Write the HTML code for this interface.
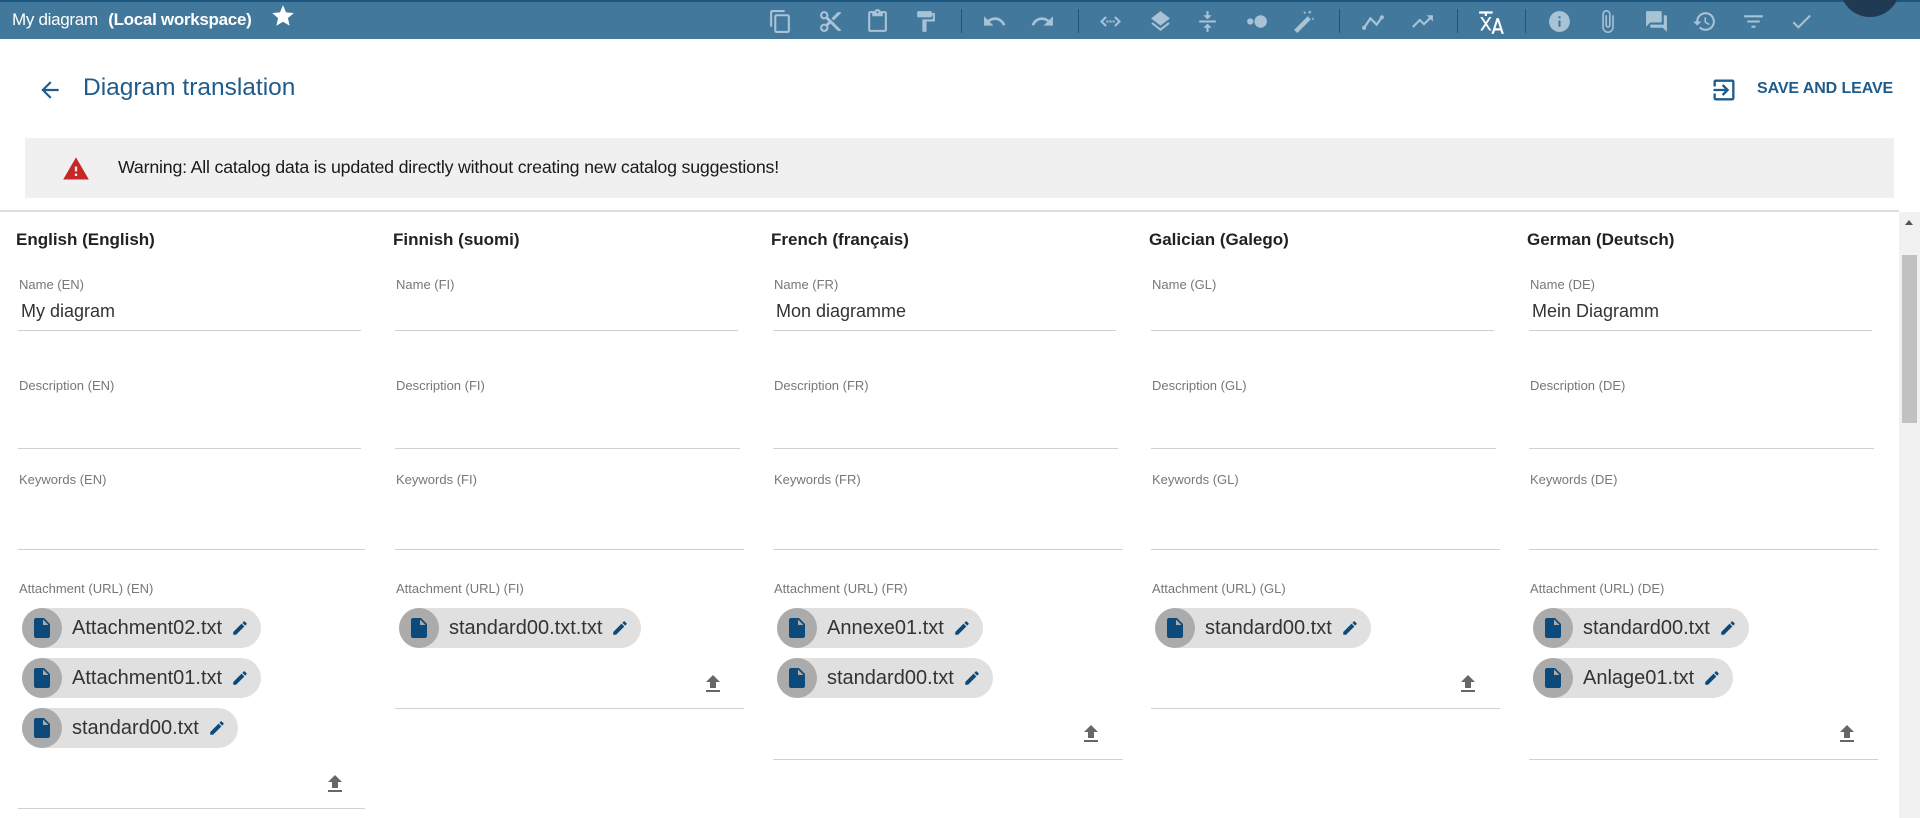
<!DOCTYPE html>
<html><head><meta charset="utf-8"><style>
*{box-sizing:border-box;margin:0;padding:0}
body{width:1920px;height:818px;overflow:hidden;background:#fff;font-family:"Liberation Sans",Arial,sans-serif;position:relative}
.abs{position:absolute;white-space:nowrap}
.top{position:absolute;left:0;top:0;width:1920px;height:39px;background:#41789c;border-top:2px solid #1b5680}
.top .t{position:absolute;left:12px;top:8px;color:#fff;font-size:17px;letter-spacing:-0.3px;white-space:nowrap}
.top .t b{margin-left:6px}
.ic{position:absolute;top:7px;width:25px;height:25px;fill:#a9c3d6}
.sep{position:absolute;top:7px;width:1px;height:24px;background:#1d5580}
.av{position:absolute;left:1840px;top:-45px;width:60px;height:60px;border-radius:50%;background:#1f3a52}
.h{position:absolute;left:0;top:230px;font-size:17px;font-weight:bold;color:#222;white-space:nowrap}
.lbl{position:absolute;font-size:13px;color:#777;white-space:nowrap}
.val{position:absolute;font-size:18px;color:#333;white-space:nowrap}
.ln{position:absolute;height:1px;background:#d0d0d0}
.chip{position:absolute;height:40px;border-radius:20px;background:#e0e0e0;display:flex;align-items:center;padding-right:12px;font-size:20px;color:#333;white-space:nowrap}
.chip .c{width:40px;height:40px;border-radius:50%;background:#ababab;display:flex;align-items:center;justify-content:center;margin-right:10px}
.chip svg.e{margin-left:9px}
</style></head><body>
<div class="top">
<div class="t">My diagram <b>(Local workspace)</b></div>
<svg class="abs" style="left:270px;top:1px" width="26" height="26" viewBox="0 0 24 24"><path fill="#fff" d="M12 17.27L18.18 21l-1.64-7.030L22 9.24l-7.19-.61L12 2 9.19 8.63 2 9.24l5.46 4.73L5.82 21z"/></svg>
<svg class="ic" style="left:768px" viewBox="0 0 24 24"><path d="M16 1H4c-1.1 0-2 .9-2 2v14h2V3h12V1zm3 4H8c-1.1 0-2 .9-2 2v14c0 1.1.9 2 2 2h11c1.1 0 2-.9 2-2V7c0-1.1-.9-2-2-2zm0 16H8V7h11v14z"/></svg>
<svg class="ic" style="left:818px" viewBox="0 0 24 24"><path d="M9.64 7.64c.23-.5.36-1.05.36-1.64 0-2.21-1.79-4-4-4S2 3.79 2 6s1.79 4 4 4c.59 0 1.14-.13 1.64-.36L10 12l-2.36 2.36C7.14 14.13 6.59 14 6 14c-2.21 0-4 1.79-4 4s1.79 4 4 4 4-1.79 4-4c0-.59-.13-1.14-.36-1.64L12 14l7 7h3v-1L9.64 7.64zM6 8c-1.1 0-2-.89-2-2s.9-2 2-2 2 .89 2 2-.9 2-2 2zm0 12c-1.1 0-2-.89-2-2s.9-2 2-2 2 .89 2 2-.9 2-2 2zM19 3l-6 6 2 2 7-7V3z"/></svg>
<svg class="ic" style="left:865px" viewBox="0 0 24 24"><path d="M19 2h-4.18C14.4.84 13.3 0 12 0c-1.3 0-2.4.84-2.82 2H5c-1.1 0-2 .9-2 2v16c0 1.1.9 2 2 2h14c1.1 0 2-.9 2-2V4c0-1.1-.9-2-2-2zm-7 0c.55 0 1 .45 1 1s-.45 1-1 1-1-.45-1-1 .45-1 1-1zm7 18H5V4h2v3h10V4h2v16z"/></svg>
<svg class="ic" style="left:913px" viewBox="0 0 24 24"><path d="M18 4V3c0-.55-.45-1-1-1H5c-.55 0-1 .45-1 1v4c0 .55.45 1 1 1h12c.55 0 1-.45 1-1V6h1v4H9v11c0 .55.45 1 1 1h2c.55 0 1-.45 1-1v-9h8V4h-3z"/></svg>
<div class="sep" style="left:961px"></div>
<svg class="ic" style="left:982px" viewBox="0 0 24 24"><path d="M12.5 8c-2.65 0-5.05.99-6.9 2.6L2 7v9h9l-3.62-3.62c1.39-1.16 3.16-1.88 5.12-1.88 3.54 0 6.55 2.31 7.6 5.5l2.37-.78C21.08 11.03 17.15 8 12.5 8z"/></svg>
<svg class="ic" style="left:1030px" viewBox="0 0 24 24"><path d="M18.4 10.6C16.55 8.99 14.15 8 11.5 8c-4.65 0-8.58 3.03-9.96 7.22L3.9 16c1.05-3.19 4.05-5.5 7.6-5.5 1.95 0 3.73.72 5.12 1.88L13 16h9V7l-3.6 3.6z"/></svg>
<div class="sep" style="left:1078px"></div>
<svg class="ic" style="left:1098px" viewBox="0 0 24 24"><path d="M7 7l-5 5 5 5 1.4-1.4L4.8 12l3.6-3.6zM17 7l-1.4 1.4 3.6 3.6-3.6 3.6L17 17l5-5zM8 11h2v2H8zm3 0h2v2h-2zm3 0h2v2h-2z"/></svg>
<svg class="ic" style="left:1148px" viewBox="0 0 24 24"><path d="M11.99 18.54l-7.37-5.73L3 14.07l9 7 9-7-1.63-1.27-7.38 5.74zM12 16l7.36-5.73L21 9l-9-7-9 7 1.63 1.27L12 16z"/></svg>
<svg class="ic" style="left:1195px" viewBox="0 0 24 24"><path d="M4 11h16v2H4zM11 2h2v4h3l-4 4-4-4h3zM12 14l4 4h-3v4h-2v-4H8z"/></svg>
<svg class="ic" style="left:1244px" viewBox="0 0 24 24"><circle cx="6" cy="12" r="3"/><circle cx="16" cy="12" r="6"/></svg>
<svg class="ic" style="left:1290px" viewBox="0 0 24 24"><path d="M17 7l3 3L7 23l-3-3zM19 1l.6 1.4L21 3l-1.4.6L19 5l-.6-1.4L17 3l1.4-.6zM14 2l.5 1 1 .5-1 .5-.5 1-.5-1-1-.5 1-.5zM22 8l.5 1 1 .5-1 .5-.5 1-.5-1-1-.5 1-.5z"/></svg>
<div class="sep" style="left:1339px"></div>
<svg class="ic" style="left:1361px" viewBox="0 0 24 24"><path d="M3 18l6-9 6 6 5-7" fill="none" stroke="#a9c3d6" stroke-width="2.2"/><circle cx="3" cy="18" r="2"/><circle cx="20" cy="8" r="2"/></svg>
<svg class="ic" style="left:1410px" viewBox="0 0 24 24"><path d="M16 6l2.29 2.29-4.88 4.88-4-4L2 16.59 3.41 18l6-6 4 4 6.3-6.29L22 12V6z"/></svg>
<div class="sep" style="left:1457px"></div>
<svg class="ic" style="left:1478px;fill:#fff;width:27px;height:27px;top:6px" viewBox="0 0 24 24"><path d="M1 3h12v2H8v2H6V5H1zM2 8h2l3 4.5L10 8h2l-4 6 4 6h-2l-3-4.5L4 20H2l4-6zM16.5 9h2L23 23h-2l-1-3h-5l-1 3h-2zm-1 9h4l-2-6z"/></svg>
<div class="sep" style="left:1525px"></div>
<svg class="ic" style="left:1547px" viewBox="0 0 24 24"><path d="M12 2C6.48 2 2 6.48 2 12s4.48 10 10 10 10-4.48 10-10S17.52 2 12 2zm1 15h-2v-6h2v6zm0-8h-2V7h2v2z"/></svg>
<svg class="ic" style="left:1595px" viewBox="0 0 24 24"><path d="M16.5 6v11.5c0 2.21-1.79 4-4 4s-4-1.79-4-4V5c0-1.38 1.12-2.5 2.5-2.5s2.5 1.12 2.5 2.5v10.5c0 .55-.45 1-1 1s-1-.45-1-1V6H10v9.5c0 1.38 1.12 2.5 2.5 2.5s2.5-1.12 2.5-2.5V5c0-2.21-1.79-4-4-4S7 2.79 7 5v12.5c0 3.04 2.46 5.5 5.5 5.5s5.5-2.46 5.5-5.5V6h-1.5z"/></svg>
<svg class="ic" style="left:1644px" viewBox="0 0 24 24"><path d="M21 6h-2v9H6v2c0 .55.45 1 1 1h11l4 4V7c0-.55-.45-1-1-1zm-4 6V3c0-.55-.45-1-1-1H3c-.55 0-1 .45-1 1v14l4-4h10c.55 0 1-.45 1-1z"/></svg>
<svg class="ic" style="left:1692px" viewBox="0 0 24 24"><path d="M13 3c-4.97 0-9 4.03-9 9H1l3.89 3.89.07.14L9 12H6c0-3.87 3.13-7 7-7s7 3.13 7 7-3.13 7-7 7c-1.93 0-3.68-.79-4.94-2.06l-1.42 1.42C8.27 19.99 10.51 21 13 21c4.97 0 9-4.03 9-9s-4.03-9-9-9zm-1 5v5l4.28 2.54.72-1.21-3.5-2.08V8H12z"/></svg>
<svg class="ic" style="left:1741px" viewBox="0 0 24 24"><path d="M10 18h4v-2h-4v2zM3 6v2h18V6H3zm3 7h12v-2H6v2z"/></svg>
<svg class="ic" style="left:1789px" viewBox="0 0 24 24"><path d="M9 16.17L4.83 12l-1.42 1.41L9 19 21 7l-1.41-1.41z"/></svg>
<div class="av"></div>
</div>

<svg class="abs" style="left:37px;top:77px" width="26" height="26" viewBox="0 0 24 24"><path fill="#1f5c8b" d="M20 11H7.83l5.59-5.59L12 4l-8 8 8 8 1.41-1.41L7.83 13H20v-2z"/></svg>
<div class="abs" style="left:83px;top:74px;font-size:24.5px;color:#1f5c8b">Diagram translation</div>
<svg class="abs" style="left:1710px;top:76px" width="28" height="28" viewBox="0 0 24 24"><path fill="#1f5c8b" d="M10.09 15.59L11.5 17l5-5-5-5-1.41 1.41L12.67 11H3v2h9.67l-2.58 2.59zM19 3H5c-1.11 0-2 .9-2 2v4h2V5h14v14H5v-4H3v4c0 1.1.89 2 2 2h14c1.1 0 2-.9 2-2V5c0-1.1-.9-2-2-2z"/></svg>
<div class="abs" style="left:1757px;top:80px;font-size:16px;font-weight:bold;color:#1f5c8b;letter-spacing:-0.1px">SAVE AND LEAVE</div>

<div class="abs" style="left:25px;top:138px;width:1869px;height:60px;background:#f0f0f0"></div>
<svg class="abs" style="left:62px;top:155px" width="28" height="28" viewBox="0 0 24 24"><path fill="#c62828" d="M1 21h22L12 2 1 21zm12-3h-2v-2h2v2zm0-4h-2v-4h2v4z"/></svg>
<div class="abs" style="left:118px;top:157px;font-size:17.8px;color:#1a1a1a;letter-spacing:-0.2px">Warning: All catalog data is updated directly without creating new catalog suggestions!</div>
<div class="abs" style="left:0;top:210px;width:1899px;height:2px;background:#ddd"></div>
<div class="abs" style="left:1899px;top:212px;width:21px;height:606px;background:#f1f1f1"></div>
<div class="abs" style="left:1902px;top:255px;width:15px;height:168px;background:#c1c1c1"></div>
<svg class="abs" style="left:1904px;top:219px" width="10" height="8"><path d="M5 1L9 6H1z" fill="#555"/></svg>

<div class="abs" style="left:16px;top:0">
<div class="h">English (English)</div>
<div class="lbl" style="left:3px;top:277px">Name (EN)</div><div class="val" style="left:5px;top:301px">My diagram</div><div class="ln" style="left:2px;top:330px;width:343px"></div>
<div class="lbl" style="left:3px;top:378px">Description (EN)</div><div class="ln" style="left:2px;top:448px;width:343px"></div>
<div class="lbl" style="left:3px;top:472px">Keywords (EN)</div><div class="ln" style="left:2px;top:549px;width:347px"></div>
<div class="lbl" style="left:3px;top:581px">Attachment (URL) (EN)</div>
<div class="chip" style="left:6px;top:608px"><div class="c"><svg width="24" height="24" viewBox="0 0 24 24"><path fill="#0b4a7a" d="M6 2c-1.1 0-2 .9-2 2v16c0 1.1.9 2 2 2h12c1.1 0 2-.9 2-2V8l-6-6H6zm7 7V3.5L18.5 9H13z"/></svg></div>Attachment02.txt<svg class="e" width="18" height="18" viewBox="0 0 24 24"><path fill="#0b4a7a" d="M3 17.25V21h3.75L17.81 9.94l-3.75-3.75L3 17.25zM20.71 7.04c.39-.39.39-1.02 0-1.41l-2.34-2.34c-.39-.39-1.02-.39-1.41 0l-1.83 1.83 3.75 3.75 1.83-1.83z"/></svg></div>
<div class="chip" style="left:6px;top:658px"><div class="c"><svg width="24" height="24" viewBox="0 0 24 24"><path fill="#0b4a7a" d="M6 2c-1.1 0-2 .9-2 2v16c0 1.1.9 2 2 2h12c1.1 0 2-.9 2-2V8l-6-6H6zm7 7V3.5L18.5 9H13z"/></svg></div>Attachment01.txt<svg class="e" width="18" height="18" viewBox="0 0 24 24"><path fill="#0b4a7a" d="M3 17.25V21h3.75L17.81 9.94l-3.75-3.75L3 17.25zM20.71 7.04c.39-.39.39-1.02 0-1.41l-2.34-2.34c-.39-.39-1.02-.39-1.41 0l-1.83 1.83 3.75 3.75 1.83-1.83z"/></svg></div>
<div class="chip" style="left:6px;top:708px"><div class="c"><svg width="24" height="24" viewBox="0 0 24 24"><path fill="#0b4a7a" d="M6 2c-1.1 0-2 .9-2 2v16c0 1.1.9 2 2 2h12c1.1 0 2-.9 2-2V8l-6-6H6zm7 7V3.5L18.5 9H13z"/></svg></div>standard00.txt<svg class="e" width="18" height="18" viewBox="0 0 24 24"><path fill="#0b4a7a" d="M3 17.25V21h3.75L17.81 9.94l-3.75-3.75L3 17.25zM20.71 7.04c.39-.39.39-1.02 0-1.41l-2.34-2.34c-.39-.39-1.02-.39-1.41 0l-1.83 1.83 3.75 3.75 1.83-1.83z"/></svg></div>
<svg class="abs" style="left:307px;top:772px" width="24" height="24" viewBox="0 0 24 24"><path fill="#666" d="M9 16h6v-6h4l-7-7-7 7h4zm-4 2h14v2H5z"/></svg>
<div class="ln" style="left:2px;top:808px;width:347px"></div>
</div>

<div class="abs" style="left:393px;top:0">
<div class="h">Finnish (suomi)</div>
<div class="lbl" style="left:3px;top:277px">Name (FI)</div><div class="ln" style="left:2px;top:330px;width:343px"></div>
<div class="lbl" style="left:3px;top:378px">Description (FI)</div><div class="ln" style="left:2px;top:448px;width:345px"></div>
<div class="lbl" style="left:3px;top:472px">Keywords (FI)</div><div class="ln" style="left:2px;top:549px;width:349px"></div>
<div class="lbl" style="left:3px;top:581px">Attachment (URL) (FI)</div>
<div class="chip" style="left:6px;top:608px"><div class="c"><svg width="24" height="24" viewBox="0 0 24 24"><path fill="#0b4a7a" d="M6 2c-1.1 0-2 .9-2 2v16c0 1.1.9 2 2 2h12c1.1 0 2-.9 2-2V8l-6-6H6zm7 7V3.5L18.5 9H13z"/></svg></div>standard00.txt.txt<svg class="e" width="18" height="18" viewBox="0 0 24 24"><path fill="#0b4a7a" d="M3 17.25V21h3.75L17.81 9.94l-3.75-3.75L3 17.25zM20.71 7.04c.39-.39.39-1.02 0-1.41l-2.34-2.34c-.39-.39-1.02-.39-1.41 0l-1.83 1.83 3.75 3.75 1.83-1.83z"/></svg></div>
<svg class="abs" style="left:308px;top:672px" width="24" height="24" viewBox="0 0 24 24"><path fill="#666" d="M9 16h6v-6h4l-7-7-7 7h4zm-4 2h14v2H5z"/></svg>
<div class="ln" style="left:2px;top:708px;width:349px"></div>
</div>

<div class="abs" style="left:771px;top:0">
<div class="h">French (français)</div>
<div class="lbl" style="left:3px;top:277px">Name (FR)</div><div class="val" style="left:5px;top:301px">Mon diagramme</div><div class="ln" style="left:2px;top:330px;width:343px"></div>
<div class="lbl" style="left:3px;top:378px">Description (FR)</div><div class="ln" style="left:2px;top:448px;width:345px"></div>
<div class="lbl" style="left:3px;top:472px">Keywords (FR)</div><div class="ln" style="left:2px;top:549px;width:350px"></div>
<div class="lbl" style="left:3px;top:581px">Attachment (URL) (FR)</div>
<div class="chip" style="left:6px;top:608px"><div class="c"><svg width="24" height="24" viewBox="0 0 24 24"><path fill="#0b4a7a" d="M6 2c-1.1 0-2 .9-2 2v16c0 1.1.9 2 2 2h12c1.1 0 2-.9 2-2V8l-6-6H6zm7 7V3.5L18.5 9H13z"/></svg></div>Annexe01.txt<svg class="e" width="18" height="18" viewBox="0 0 24 24"><path fill="#0b4a7a" d="M3 17.25V21h3.75L17.81 9.94l-3.75-3.75L3 17.25zM20.71 7.04c.39-.39.39-1.02 0-1.41l-2.34-2.34c-.39-.39-1.02-.39-1.41 0l-1.83 1.83 3.75 3.75 1.83-1.83z"/></svg></div>
<div class="chip" style="left:6px;top:658px"><div class="c"><svg width="24" height="24" viewBox="0 0 24 24"><path fill="#0b4a7a" d="M6 2c-1.1 0-2 .9-2 2v16c0 1.1.9 2 2 2h12c1.1 0 2-.9 2-2V8l-6-6H6zm7 7V3.5L18.5 9H13z"/></svg></div>standard00.txt<svg class="e" width="18" height="18" viewBox="0 0 24 24"><path fill="#0b4a7a" d="M3 17.25V21h3.75L17.81 9.94l-3.75-3.75L3 17.25zM20.71 7.04c.39-.39.39-1.02 0-1.41l-2.34-2.34c-.39-.39-1.02-.39-1.41 0l-1.83 1.83 3.75 3.75 1.83-1.83z"/></svg></div>
<svg class="abs" style="left:308px;top:722px" width="24" height="24" viewBox="0 0 24 24"><path fill="#666" d="M9 16h6v-6h4l-7-7-7 7h4zm-4 2h14v2H5z"/></svg>
<div class="ln" style="left:2px;top:759px;width:350px"></div>
</div>

<div class="abs" style="left:1149px;top:0">
<div class="h">Galician (Galego)</div>
<div class="lbl" style="left:3px;top:277px">Name (GL)</div><div class="ln" style="left:2px;top:330px;width:343px"></div>
<div class="lbl" style="left:3px;top:378px">Description (GL)</div><div class="ln" style="left:2px;top:448px;width:345px"></div>
<div class="lbl" style="left:3px;top:472px">Keywords (GL)</div><div class="ln" style="left:2px;top:549px;width:349px"></div>
<div class="lbl" style="left:3px;top:581px">Attachment (URL) (GL)</div>
<div class="chip" style="left:6px;top:608px"><div class="c"><svg width="24" height="24" viewBox="0 0 24 24"><path fill="#0b4a7a" d="M6 2c-1.1 0-2 .9-2 2v16c0 1.1.9 2 2 2h12c1.1 0 2-.9 2-2V8l-6-6H6zm7 7V3.5L18.5 9H13z"/></svg></div>standard00.txt<svg class="e" width="18" height="18" viewBox="0 0 24 24"><path fill="#0b4a7a" d="M3 17.25V21h3.75L17.81 9.94l-3.75-3.75L3 17.25zM20.71 7.04c.39-.39.39-1.02 0-1.41l-2.34-2.34c-.39-.39-1.02-.39-1.41 0l-1.83 1.83 3.75 3.75 1.83-1.83z"/></svg></div>
<svg class="abs" style="left:307px;top:672px" width="24" height="24" viewBox="0 0 24 24"><path fill="#666" d="M9 16h6v-6h4l-7-7-7 7h4zm-4 2h14v2H5z"/></svg>
<div class="ln" style="left:2px;top:708px;width:349px"></div>
</div>

<div class="abs" style="left:1527px;top:0">
<div class="h">German (Deutsch)</div>
<div class="lbl" style="left:3px;top:277px">Name (DE)</div><div class="val" style="left:5px;top:301px">Mein Diagramm</div><div class="ln" style="left:2px;top:330px;width:343px"></div>
<div class="lbl" style="left:3px;top:378px">Description (DE)</div><div class="ln" style="left:2px;top:448px;width:345px"></div>
<div class="lbl" style="left:3px;top:472px">Keywords (DE)</div><div class="ln" style="left:2px;top:549px;width:349px"></div>
<div class="lbl" style="left:3px;top:581px">Attachment (URL) (DE)</div>
<div class="chip" style="left:6px;top:608px"><div class="c"><svg width="24" height="24" viewBox="0 0 24 24"><path fill="#0b4a7a" d="M6 2c-1.1 0-2 .9-2 2v16c0 1.1.9 2 2 2h12c1.1 0 2-.9 2-2V8l-6-6H6zm7 7V3.5L18.5 9H13z"/></svg></div>standard00.txt<svg class="e" width="18" height="18" viewBox="0 0 24 24"><path fill="#0b4a7a" d="M3 17.25V21h3.75L17.81 9.94l-3.75-3.75L3 17.25zM20.71 7.04c.39-.39.39-1.02 0-1.41l-2.34-2.34c-.39-.39-1.02-.39-1.41 0l-1.83 1.83 3.75 3.75 1.83-1.83z"/></svg></div>
<div class="chip" style="left:6px;top:658px"><div class="c"><svg width="24" height="24" viewBox="0 0 24 24"><path fill="#0b4a7a" d="M6 2c-1.1 0-2 .9-2 2v16c0 1.1.9 2 2 2h12c1.1 0 2-.9 2-2V8l-6-6H6zm7 7V3.5L18.5 9H13z"/></svg></div>Anlage01.txt<svg class="e" width="18" height="18" viewBox="0 0 24 24"><path fill="#0b4a7a" d="M3 17.25V21h3.75L17.81 9.94l-3.75-3.75L3 17.25zM20.71 7.04c.39-.39.39-1.02 0-1.41l-2.34-2.34c-.39-.39-1.02-.39-1.41 0l-1.83 1.83 3.75 3.75 1.83-1.83z"/></svg></div>
<svg class="abs" style="left:308px;top:722px" width="24" height="24" viewBox="0 0 24 24"><path fill="#666" d="M9 16h6v-6h4l-7-7-7 7h4zm-4 2h14v2H5z"/></svg>
<div class="ln" style="left:2px;top:759px;width:349px"></div>
</div>
</body></html>
